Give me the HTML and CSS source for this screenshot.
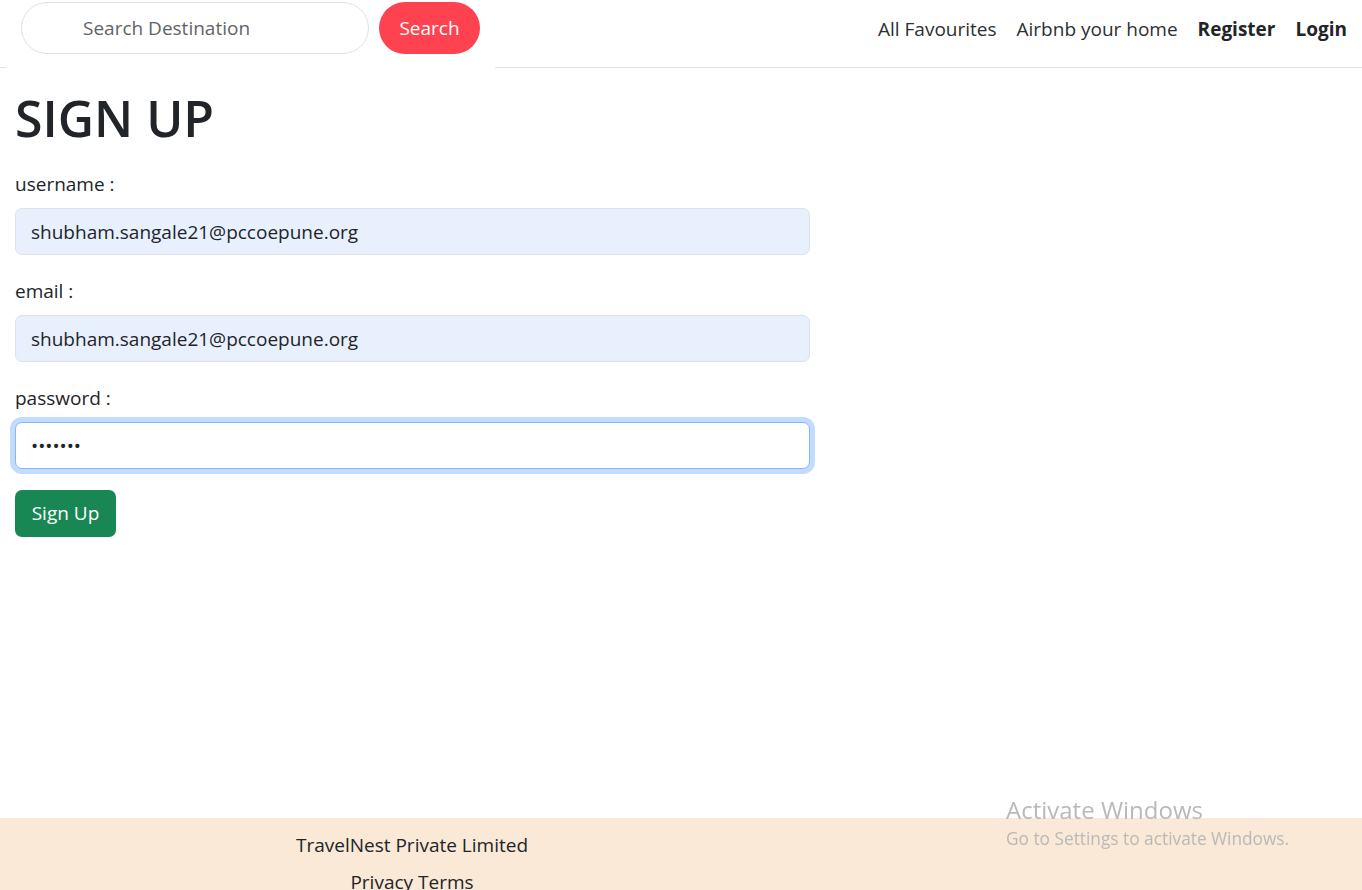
FILE: index.html
```html
<!DOCTYPE html>
<html lang="en">
<head>
<meta charset="utf-8">
<title>Sign Up</title>
<link rel="stylesheet" href="styles.css">
</head>
<body>
<nav class="topbar">
  <form class="search-box">
    <input class="search-input" type="text" placeholder="Search Destination">
    <button class="search-btn" type="button">Search</button>
  </form>
  <ul class="nav-links">
    <li><a class="nav-link" href="#">All Favourites</a></li>
    <li><a class="nav-link" href="#">Airbnb your home</a></li>
    <li><a class="nav-link strong" href="#">Register</a></li>
    <li><a class="nav-link strong" href="#">Login</a></li>
  </ul>
</nav>
<main class="content">
  <h1 class="title">SIGN UP</h1>
  <form class="signup-form">
    <div class="field">
      <label class="field-label" for="u">username :</label>
      <input class="field-input filled" id="u" type="text" value="shubham.sangale21@pccoepune.org">
    </div>
    <div class="field">
      <label class="field-label" for="e">email :</label>
      <input class="field-input filled" id="e" type="text" value="shubham.sangale21@pccoepune.org">
    </div>
    <div class="field">
      <label class="field-label" for="p">password :</label>
      <input class="field-input focused" id="p" type="password" value="1234567">
    </div>
    <button class="signup-btn" type="button">Sign Up</button>
  </form>
</main>
<footer class="footer">
  <div class="footer-col">
    <p class="footer-line">TravelNest Private Limited</p>
    <p class="footer-line">Privacy Terms</p>
  </div>
  <div class="footer-col rest"></div>
</footer>
<div class="watermark">
  <div class="wm-title">Activate Windows</div>
  <div class="wm-sub">Go to Settings to activate Windows.</div>
</div>
</body>
</html>
```

FILE: styles.css
```css
* { box-sizing: border-box; }
html, body { margin: 0; padding: 0; }
body {
  font-family: "Open Sans", "Noto Sans", "Liberation Sans", sans-serif;
  font-size: 20px;
  line-height: 1.5;
  color: #212529;
  background: #fff;
}
.topbar {
  display: flex;
  align-items: flex-start;
  justify-content: space-between;
  height: 68px;
  border-bottom: 1px solid #dee2e6;
}
.search-box {
  position: relative;
  display: flex;
  align-items: center;
  margin: 0 0 0 6px;
  width: 489px;
  height: 68px;
  padding: 2px 0 14px 15px;
  background: #fff;
}
.search-input {
  width: 348px;
  height: 52px;
  border: 1px solid #dee2e6;
  border-radius: 26px;
  padding: 0 0 0 61px;
  font: inherit;
  font-size: 19px;
  color: #212529;
  outline: none;
}
.search-input::placeholder { color: #5f6368; }
.search-btn {
  margin-left: 10px;
  width: 101px;
  height: 52px;
  border: 0;
  border-radius: 26px;
  background: #ff424f;
  color: #fff;
  font: inherit;
  font-size: 19px;
}
.nav-links {
  display: flex;
  gap: 20px;
  list-style: none;
  margin: 0;
  padding: 14px 15px 0 0;
}
.nav-link {
  color: #2b2f33;
  text-decoration: none;
  font-size: 19px;
  line-height: 30px;
}
.nav-link.strong { font-weight: 700; color: #212529; }
.content {
  padding: 0 15px;
  min-height: 750px;
}
.title {
  margin: 0 0 21px;
  padding-top: 20px;
  font-size: 50px;
  font-weight: 600;
  line-height: 60px;
}
.signup-form { width: 795px; }
.field { margin-bottom: 21px; }
.field-label {
  display: block;
  margin-bottom: 9px;
  font-size: 19px;
  line-height: 30px;
}
.field-input {
  display: block;
  width: 100%;
  height: 47px;
  padding: 0 15px;
  border: 1px solid #dee2e6;
  border-radius: 7px;
  font: inherit;
  font-size: 19px;
  color: #212529;
  outline: none;
}
.field-input.filled { background: #e8f0fe; }
.field-input.focused {
  background: #fff;
  border-color: #86b7fe;
  box-shadow: 0 0 0 5px #c2dbfe;
}
.signup-btn {
  width: 101px;
  height: 47px;
  border: 0;
  border-radius: 7px;
  background: #198754;
  color: #fff;
  font: inherit;
  font-size: 19px;
}
.footer {
  display: flex;
  background: #f9e9d6;
  padding-top: 12px;
  min-height: 120px;
}
.footer-col { flex: 0 0 824px; text-align: center; }
.footer-col.rest { flex: 1 1 auto; }
.footer-line {
  margin: 0 0 7px;
  font-size: 19px;
  line-height: 30px;
  color: #212529;
}
.watermark {
  position: fixed;
  left: 1006px;
  top: 794px;
  color: #b9b9b9;
  pointer-events: none;
}
.wm-title { font-size: 24px; line-height: 32px; }
.wm-sub { font-size: 17.3px; line-height: 26px; }
```
